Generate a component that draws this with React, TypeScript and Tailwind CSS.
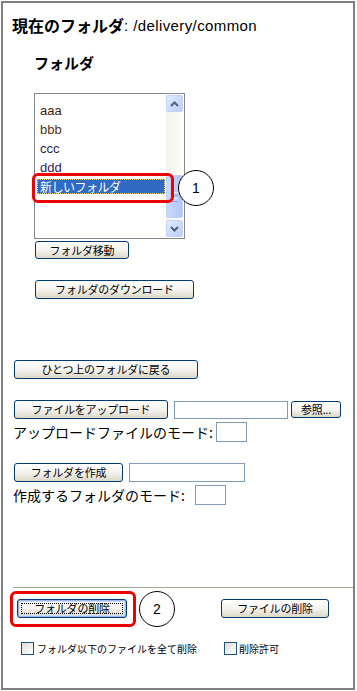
import React from "react";

const JP = "font-['Noto_Sans_CJK_JP',sans-serif]";

function Btn({
  children,
  className = "",
  focus = false,
}: {
  children: React.ReactNode;
  className?: string;
  focus?: boolean;
}) {
  return (
    <button
      type="button"
      className={
        "relative flex shrink-0 items-center justify-center rounded-[3px] border border-[#003c74] bg-linear-to-b from-[#ffffff] via-[#f4f3ee] to-[#dcd8c8] p-0 text-[11px] leading-none tracking-[-0.2px] text-black font-['Noto_Sans_CJK_JP',sans-serif] " +
        (focus ? "shadow-[inset_0_0_0_1px_#9db8ec,inset_0_0_0_2px_#c9dbf7] " : "") +
        className
      }
    >
      {focus && (
        <span className="pointer-events-none absolute inset-[3px] border border-dotted border-black" />
      )}
      <span className="relative">{children}</span>
    </button>
  );
}

function TextBox({ className = "" }: { className?: string }) {
  return <div className={"shrink-0 border border-[#7f9db9] bg-white " + className} />;
}

function ScrollBtn({ up }: { up: boolean }) {
  return (
    <div className="flex h-[17px] w-[17px] items-center justify-center rounded-[2px] border border-[#c3d3f8] bg-linear-to-br from-[#e3ebfd] to-[#b9cdf6]">
      <svg width="9" height="6" viewBox="0 0 9 6">
        <path
          d={up ? "M1 5 L4.5 1.5 L8 5" : "M1 1 L4.5 4.5 L8 1"}
          fill="none"
          stroke="#4d6185"
          strokeWidth="2"
        />
      </svg>
    </div>
  );
}

function Checkbox() {
  return (
    <div className="h-[13px] w-[13px] shrink-0 border border-[#1c5180] bg-linear-to-br from-[#dcdcd5] to-[#ffffff]" />
  );
}

function Circle({ n, className }: { n: string; className: string }) {
  return (
    <div
      className={
        "absolute flex h-[36px] w-[36px] items-center justify-center rounded-full border border-black bg-white text-[14px] leading-none text-black font-['Liberation_Sans',sans-serif] " +
        className
      }
    >
      {n}
    </div>
  );
}

export default function App() {
  const items = [
    { t: "aaa", c: "text-[#4a1a0c]" },
    { t: "bbb", c: "text-[#553410]" },
    { t: "ccc", c: "text-[#2a1a4a]" },
    { t: "ddd", c: "text-[#331a5c]" },
  ];
  return (
    <div className="h-[691px] w-[357px] bg-white p-px">
      <div className="flex h-[689px] w-[354px] flex-col border-2 border-[#808080] bg-white">
        {/* Title */}
        <div className="ml-[9px] mt-[12px] flex h-[20px] items-center leading-none text-black">
          <span className={"text-[16px] font-bold " + JP}>現在のフォルダ</span>
          <span className="text-[15px] tracking-[0.4px] font-['Liberation_Sans',sans-serif]">: /delivery/common</span>
        </div>

        {/* Folder label */}
        <div className={"ml-[31px] mt-[17px] flex h-[20px] items-center text-[15px] font-bold leading-none text-black " + JP}>
          フォルダ
        </div>

        {/* Listbox */}
        <div className="relative ml-[31px] mt-[21px] h-[146px] w-[151px]">
          <div className="flex h-full w-full border border-[#828790] bg-white p-px">
            <div className="flex flex-1 flex-col pt-[6px]">
              {items.map((it) => (
                <div
                  key={it.t}
                  className={"flex h-[19px] items-center pl-[4px] text-[13px] leading-none font-['Liberation_Sans',sans-serif] " + it.c}
                >
                  {it.t}
                </div>
              ))}
              <div className="flex h-[19px] items-center">
                <div
                  className={"ml-px flex h-[15px] w-[128px] items-center border border-dotted border-[#e8d27a] bg-[#316ac5] pl-[2px] text-[12px] leading-none tracking-[-0.5px] text-white " + JP}
                >
                  新しいフォルダ
                </div>
              </div>
            </div>
            <div className="flex w-[17px] flex-col bg-linear-to-r from-[#f3f1ea] to-[#fdfdfa]">
              <ScrollBtn up />
              <div className="h-[63px]" />
              <div className="flex h-[43px] w-[17px] flex-col items-center justify-center gap-[2px] rounded-[2px] border border-[#c3d3f8] bg-linear-to-r from-[#c9d8fc] to-[#b2c7f5]">
                <div className="h-px w-[7px] bg-[#eef3fe]" />
                <div className="h-px w-[7px] bg-[#8ca6e0]" />
                <div className="h-px w-[7px] bg-[#eef3fe]" />
                <div className="h-px w-[7px] bg-[#8ca6e0]" />
              </div>
              <div className="h-[2px]" />
              <ScrollBtn up={false} />
            </div>
          </div>
          <div className="pointer-events-none absolute left-[-2px] top-[80px] h-[30px] w-[142px] rounded-[6px] border-[3px] border-[#ee0000]" />
          <Circle n="1" className="left-[144px] top-[77px]" />
        </div>

        <Btn className="ml-[32px] mt-[2px] h-[18px] w-[94px]">フォルダ移動</Btn>
        <Btn className="ml-[32px] mt-[21px] h-[19px] w-[159px]">フォルダのダウンロード</Btn>
        <Btn className="ml-[11px] mt-[61px] h-[19px] w-[184px]">ひとつ上のフォルダに戻る</Btn>

        {/* Upload */}
        <div className="ml-[11px] mt-[21px] flex h-[19px] items-center">
          <Btn className="h-[19px] w-[154px]">ファイルをアップロード</Btn>
          <TextBox className="ml-[6px] h-[18px] w-[114px]" />
          <Btn className="ml-[3px] h-[17px] w-[50px]">参照...</Btn>
        </div>
        <div className="ml-[10px] mt-[3px] flex h-[20px] items-center">
          <span className={"w-[203px] text-[14px] leading-none text-black " + JP}>アップロードファイルのモード:</span>
          <TextBox className="h-[20px] w-[31px]" />
        </div>

        {/* Create folder */}
        <div className="ml-[11px] mt-[21px] flex h-[19px] items-center">
          <Btn className="h-[19px] w-[109px]">フォルダを作成</Btn>
          <TextBox className="ml-[6px] h-[19px] w-[116px]" />
        </div>
        <div className="ml-[10px] mt-[3px] flex h-[20px] items-center">
          <span className={"w-[182px] text-[14px] leading-none text-black " + JP}>作成するフォルダのモード:</span>
          <TextBox className="h-[20px] w-[31px]" />
        </div>

        {/* Separator */}
        <div className="ml-[10px] mt-[82px] h-px bg-[#aca899]" />

        {/* Delete row */}
        <div className="relative mt-[11px] flex h-[19px] items-center">
          <Btn focus className="ml-[14px] h-[19px] w-[110px]">フォルダの削除</Btn>
          <Btn className="ml-[94px] h-[19px] w-[108px]">ファイルの削除</Btn>
          <div className="pointer-events-none absolute left-[7px] top-[-8px] h-[36px] w-[126px] rounded-[6px] border-[3px] border-[#ee0000]" />
          <Circle n="2" className="left-[136px] top-[-8px]" />
        </div>

        {/* Checkboxes */}
        <div className="ml-[18px] mt-[24px] flex h-[13px] items-center">
          <div className="flex w-[203px] items-center">
            <Checkbox />
            <span className={"ml-[3px] text-[10px] leading-none text-black " + JP}>フォルダ以下のファイルを全て削除</span>
          </div>
          <div className="flex items-center">
            <Checkbox />
            <span className={"ml-[2px] text-[10px] leading-none text-black " + JP}>削除許可</span>
          </div>
        </div>
      </div>
    </div>
  );
}
